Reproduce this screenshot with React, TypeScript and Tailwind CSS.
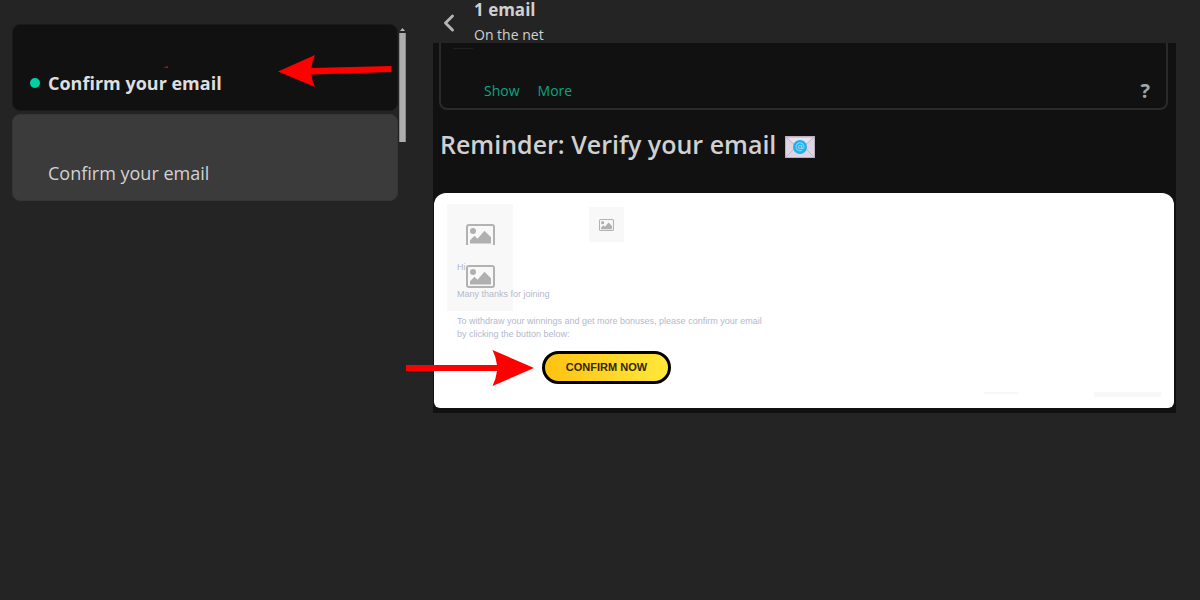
import { ChevronLeft } from 'lucide-react'
import clsx from 'clsx'

const messages = [
  { id: 1, subject: 'Confirm your email', unread: true },
  { id: 2, subject: 'Confirm your email', unread: false },
]

const ImageIcon = ({ className }: { className?: string }) => (
  <svg viewBox="0 0 29 23" className={className} fill="none">
    <rect x="1" y="1" width="27" height="21" rx="2" stroke="#b2b2b2" strokeWidth="2" />
    <circle cx="7" cy="7" r="3" fill="#b0b0b0" />
    <path d="M4 19.5v-3.2l4.500-4.500 3 3 7-8 6.500 6.500v6.200z" fill="#b0b0b0" />
  </svg>
)

const MailIcon = () => (
  <svg viewBox="0 0 30 22" className="w-[30px] h-[22px]">
    <rect x="0.5" y="0.5" width="29" height="21" fill="#ddd5e4" stroke="#b9b0c2" />
    <path d="M1 21 11 11M29 21 19 11" stroke="#c3b8cd" />
    <path d="M1 1l14 13L29 1z" fill="#e9e3ee" stroke="#bcb2c6" />
    <circle cx="15" cy="11" r="7" fill="#1fb0ee" />
    <circle cx="15" cy="11" r="1.7" fill="none" stroke="#7fd4f8" strokeWidth="1.2" />
    <path d="M16.8 9v2.6c0 1.6 2.4 1.2 2.2-.9a4 4 0 1 0-2 3.600" fill="none" stroke="#7fd4f8" strokeWidth="1.1" />
  </svg>
)

const MessageList = () => (
  <aside className="flex w-[34%] gap-px pt-6 pl-3 pr-0.5 shrink-0">
    <div className="flex-1 flex flex-col gap-[3px]">
      {messages.map((message) => (
        <a
          key={message.id}
          href="#message"
          className={clsx(
            'relative flex items-end h-[87px] rounded-lg pl-[17px] pb-[15px] text-lg leading-6 border',
            message.unread
              ? 'bg-[#111111] border-[#1a1a1a] font-bold text-[#dedede]'
              : 'bg-[#3b3b3b] border-[#363636] text-[#d2d2d2]'
          )}
        >
          <span className={clsx('size-2.5 rounded-full mr-2 mb-[7px]', message.unread && 'bg-[#00d1a4]')} />
          {message.subject}
          {message.unread && (
            <>
              <svg viewBox="0 0 114 33" className="absolute right-[5px] top-[30px] w-[114px] h-[33px]">
                <path d="M0 16.5 37 0Q34 7 33.500 13L113.500 11V17L33.500 19.500Q34 26 37 32z" fill="#ff0000" />
              </svg>
              <svg viewBox="0 0 5 2" className="absolute left-[150px] top-[41px] w-[5px] h-0.5">
                <path d="M0 1.500 5 0V2z" fill="#e00000" />
              </svg>
            </>
          )}
        </a>
      ))}
    </div>
    <div className="w-[7px] pt-1">
      <svg viewBox="0 0 7 3" className="w-[7px] h-[3px] mb-0.5">
        <path d="M1 3 3.500 0 6 3z" fill="#b5b5b5" />
      </svg>
      <div className="h-[109px] bg-[#adadad] border-x border-[#8a8a8a]" />
    </div>
  </aside>
)

const EmailBody = () => (
  <div className="relative ml-px mr-0.5 rounded-t-xl rounded-b-md bg-white h-[215px] pl-[23px] pt-[68px] font-['Liberation_Sans',sans-serif]">
    {/* Blocked images */}
    <div className="absolute left-[13px] top-[11px] w-[66px] h-[107px] bg-[#f8f8f8]">
      <div className="absolute left-[19px] top-5 w-[29px] h-[21px] overflow-hidden">
        <ImageIcon className="w-[29px] h-[23px]" />
      </div>
      <ImageIcon className="absolute left-[19px] top-[61px] w-[29px] h-[23px]" />
    </div>
    <div className="absolute left-[155px] top-3.5 size-[35px] bg-[#f8f8f8] flex items-center justify-center">
      <ImageIcon className="w-[15px] h-3" />
    </div>

    <div className="relative flex flex-col gap-3.5 text-[9px] leading-[13px] text-[#b3b9cc]">
      <p>Hi</p>
      <p>Many thanks for joining</p>
      <p>
        To withdraw your winnings and get more bonuses, please confirm your email
        <br />
        by clicking the button below:
      </p>
    </div>

    <button className="relative mt-2.5 ml-[85px] flex items-center justify-center w-[129px] h-[33px] rounded-full border-3 border-black bg-linear-to-r from-[#ffc20e] to-[#ffe838] text-[11px] font-bold text-[#30270a]">
      CONFIRM NOW
    </button>

    <svg viewBox="0 0 128 36" className="absolute -left-7 top-[157px] w-32 h-9">
      <path d="M0 15H91Q90 7 86.500 0L128 18 86.500 36Q90 29 91 21H0z" fill="#ff0000" />
    </svg>
    <div className="absolute right-[13px] bottom-[11px] flex items-start gap-[75px]">
      <span className="w-[35px] h-0.5 bg-[#f8f8f8]" />
      <span className="w-[67px] h-[5px] bg-[#f8f8f8]" />
    </div>
  </div>
)

export default function App() {
  return (
    <div className="flex min-h-screen bg-[#242424] font-['Open_Sans',sans-serif]">
      <MessageList />

      <main className="flex-1 pl-[25px] pr-6">
        <header className="flex items-start h-[43px]">
          <button aria-label="Back" className="mt-[9px] ml-0.5 text-[#b5b5b5]">
            <ChevronLeft className="size-7" strokeWidth={2.5} />
          </button>
          <div className="ml-[11px] text-[#d0d0d0]">
            <h2 className="text-[17px] leading-5 font-bold">1 email</h2>
            <p className="text-sm leading-[30px] font-medium">On the net</p>
          </div>
        </header>

        <section className="bg-[#111111] pb-[5px]">
          <div className="flex flex-col justify-between ml-1.5 mr-2 h-[67px] pt-[5px] pb-[7px] rounded-b-lg border-2 border-t-0 border-[#2a2a2a]">
            <div className="ml-3 w-5 h-px bg-[#202020]" />
            <div className="flex items-end justify-between pl-[43px] pr-4">
              <div className="flex gap-[18px] text-sm leading-5 font-medium text-[#0ba582]">
                <a href="#show">Show</a>
                <a href="#more">More</a>
              </div>
              <button aria-label="Help" className="text-xl leading-5 font-bold text-[#a5a5a5]">?</button>
            </div>
          </div>

          <div className="flex items-end gap-[9px] h-[83px] pl-[7px] pb-[35px]">
            <h1 className="text-[25px] leading-7 font-semibold text-[#d0d0d0]">Reminder: Verify your email</h1>
            <MailIcon />
          </div>

          <EmailBody />
        </section>
      </main>
    </div>
  )
}
